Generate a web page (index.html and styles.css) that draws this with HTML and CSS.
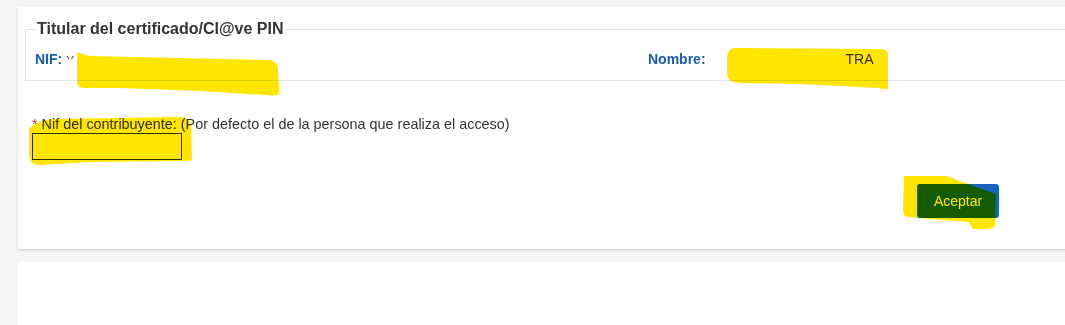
FILE: index.html
```html
<!DOCTYPE html>
<html lang="es">
<head>
<meta charset="utf-8">
<title>Titular del certificado</title>
<link rel="stylesheet" href="styles.css">
</head>
<body>
<div class="page">
  <section class="card">
    <fieldset class="holder">
      <legend class="holder-title">Titular del certificado/Cl@ve PIN</legend>
      <div class="holder-row">
        <div class="field field-nif">
          <span class="field-label">NIF:</span>
          <span class="field-value nif-value">Y</span>
        </div>
        <div class="field field-name">
          <span class="field-label">Nombre:</span>
          <span class="field-value name-value">TRA</span>
        </div>
      </div>
    </fieldset>

    <div class="form-group">
      <label class="form-label" for="nif"><span class="req">*</span> Nif del contribuyente: (Por defecto el de la persona que realiza el acceso)</label>
      <input class="form-input" id="nif" type="text">
    </div>

    <div class="actions">
      <button class="btn-primary" type="button">Aceptar</button>
    </div>
  </section>
  <section class="card card-next"></section>
</div>

<svg class="marker" width="1065" height="325" viewBox="0 0 1065 325" aria-hidden="true">
  <path d="M77 53 C80 52 82 55 90 56 L268 60 C276 61 278 64 278 70 L279 92 C279 96 274 96 266 95 L200 91 L120 88 L84 88 C78 88 77 84 77 80 Z"/>
  <path d="M736 48 L880 49 C886 49 888 51 888 56 L888 88 C888 90 884 89 878 88 L800 84 L742 83 C730 83 727 79 727 72 L727 60 C727 51 730 48 736 48 Z"/>
  <path d="M29 129 C33 124 40 120 55 119 L180 117 C188 117 191 121 191 128 L192 158 C192 161 188 161 180 161 L90 162 L40 165 C31 165 29 160 29 152 Z"/>
  <path d="M904 176 L945 176 C952 177 958 181 962 182 L996 194 L995 224 C995 229 990 229 974 229 C971 229 971 224 968 222 L930 219 L908 217 C904 217 903 213 903 208 Z"/>
</svg>
</body>
</html>
```

FILE: styles.css
```css
html, body {
  margin: 0;
  padding: 0;
}

body {
  position: relative;
  width: 1065px;
  height: 325px;
  overflow: hidden;
  background: #f5f5f5;
  font-family: "Liberation Sans", Arial, sans-serif;
  color: #333;
}

.page {
  padding: 7px 0 0 18px;
  width: 1100px;
}

.card {
  background: #fff;
  box-shadow: 0 1px 2px rgba(0, 0, 0, 0.18);
  height: 242px;
  box-sizing: border-box;
  padding: 13px 7px 0 7px;
}

.card-next {
  margin-top: 13px;
  height: 63px;
  box-shadow: none;
  padding: 0;
}

.holder {
  margin: 0;
  padding: 0 9px;
  border: 1px solid #dce5ee;
}

.holder-title {
  padding: 0 2px;
  font-size: 16px;
  font-weight: bold;
  color: #333;
}

.holder-row {
  display: grid;
  grid-template-columns: 613px 1fr;
  align-items: center;
  height: 42px;
  font-size: 14px;
}

.field {
  display: flex;
  align-items: center;
}

.field-label {
  font-weight: bold;
  color: #1a5cb4;
}

.nif-value {
  margin-left: 4px;
  display: inline-block;
  height: 5px;
  overflow: hidden;
  line-height: 14px;
  font-size: 12px;
  margin-top: -6px;
  color: #555;
}

.name-value {
  margin-left: 140px;
  font-size: 14px;
}

.form-group {
  display: flex;
  flex-direction: column;
  align-items: flex-start;
  padding: 35px 0 0 7px;
}

.form-label {
  font-size: 14.4px;
  line-height: 16px;
  color: #333;
}

.req {
  color: #c0392b;
}

.form-input {
  margin-top: 1px;
  width: 150px;
  height: 27px;
  box-sizing: border-box;
  border: 1px solid #333;
  background: #fff;
  padding: 0 4px;
}

.actions {
  display: flex;
  justify-content: flex-start;
  padding: 24px 0 0 892px;
}

.btn-primary {
  width: 82px;
  height: 34px;
  border: 0;
  border-radius: 3px;
  background: #1565c0;
  color: #fff;
  font-family: "Liberation Sans", Arial, sans-serif;
  font-size: 14px;
  cursor: pointer;
}

.marker {
  position: absolute;
  left: 0;
  top: 0;
  pointer-events: none;
  mix-blend-mode: multiply;
  fill: #ffe600;
}
```
